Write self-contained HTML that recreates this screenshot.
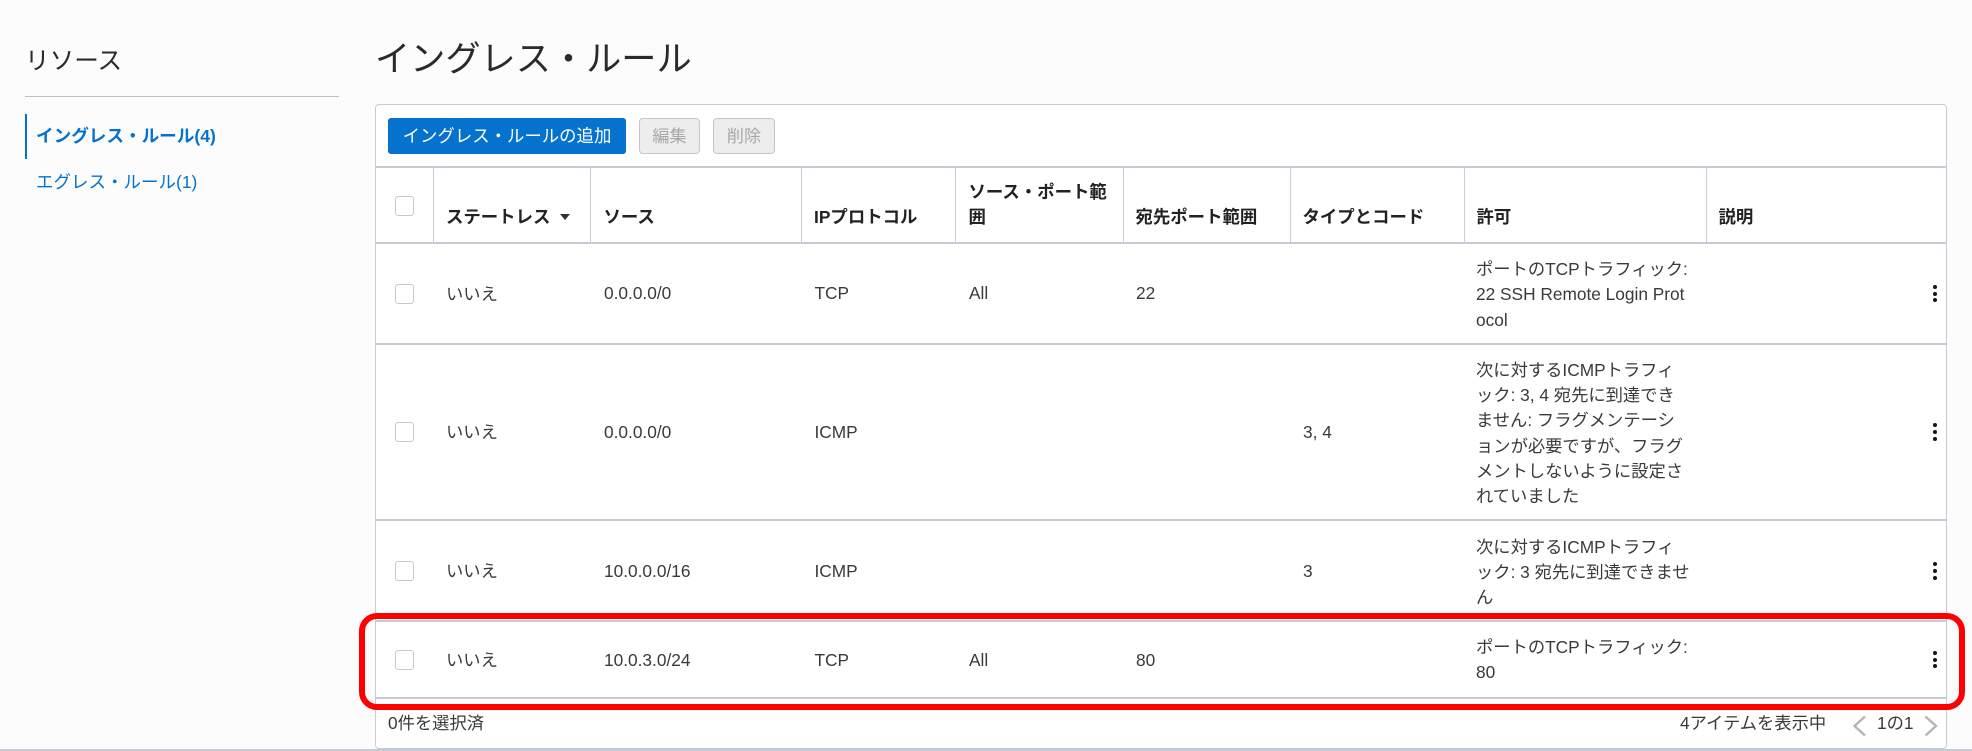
<!DOCTYPE html>
<html lang="ja">
<head>
<meta charset="utf-8">
<title>イングレス・ルール</title>
<style>
html,body{margin:0;padding:0;width:1972px;height:751px;overflow:hidden;background:#fcfcfc}
body{position:relative;font-family:"Liberation Sans","Noto Sans CJK JP",sans-serif;color:#3a3a3a;font-size:17.3px}
.a{position:absolute}
.t{position:absolute;white-space:nowrap;line-height:25.2px}
.h{position:absolute;white-space:nowrap;line-height:25.2px;font-weight:700;font-size:17.4px;color:#222}
.hl{position:absolute;left:376px;width:1570px;height:2px;background:#c6cad3}
.vl{position:absolute;top:168px;width:1px;height:75px;background:#c9cdd5}
.cb{position:absolute;left:395px;width:17px;height:18px;border:1px solid #c5c9d2;border-radius:3px;background:#fff}
.k{position:absolute;left:1932.5px;width:4px;height:4px;border-radius:50%;background:#161513}
</style>
</head>
<body>
<div class="a" style="left:0;top:749px;width:1972px;height:2px;background:#c6cad3"></div>

<div class="t" style="left:25px;top:48px;font-size:24.6px;line-height:28px;color:#2a2a2a">リソース</div>
<div class="a" style="left:25px;top:96px;width:314px;height:1px;background:#bcc0c9"></div>
<div class="a" style="left:25px;top:114px;width:2px;height:45px;background:#0572ce"></div>
<div class="t" style="left:36px;top:124px;font-size:17.6px;font-weight:700;color:#0572ce">イングレス・ルール(4)</div>
<div class="t" style="left:36px;top:169.5px;font-size:17.5px;color:#0572ce">エグレス・ルール(1)</div>

<div class="t" style="left:375px;top:39px;font-size:35.2px;line-height:42px;color:#2a2a2a">イングレス・ルール</div>

<div class="a" style="left:375px;top:104px;width:1570px;height:643px;background:#fff;border:1px solid #c6cad3;border-radius:4px;box-sizing:content-box"></div>

<div class="a" style="left:388px;top:118px;width:238px;height:36px;background:#0572ce;border-radius:3px;color:#fff;font-size:17.4px;line-height:36px;text-align:center;white-space:nowrap">イングレス・ルールの追加</div>
<div class="a" style="left:639px;top:118px;width:59px;height:34px;background:#ededed;border:1px solid #c4c6ca;border-radius:4px;color:#a8a8a8;font-size:17.2px;line-height:35px;text-align:center">編集</div>
<div class="a" style="left:713px;top:118px;width:60px;height:34px;background:#ededed;border:1px solid #c4c6ca;border-radius:4px;color:#a8a8a8;font-size:17.2px;line-height:35px;text-align:center">削除</div>

<div class="hl" style="top:166px"></div>
<div class="hl" style="top:242px"></div>
<div class="hl" style="top:343px"></div>
<div class="hl" style="top:519px"></div>
<div class="hl" style="top:620px"></div>
<div class="hl" style="top:697px"></div>

<div class="vl" style="left:433px"></div>
<div class="vl" style="left:590px"></div>
<div class="vl" style="left:801px"></div>
<div class="vl" style="left:955px"></div>
<div class="vl" style="left:1123px"></div>
<div class="vl" style="left:1290px"></div>
<div class="vl" style="left:1464px"></div>
<div class="vl" style="left:1706px"></div>

<div class="cb" style="top:196px"></div>
<div class="h" style="left:446px;top:205px">ステートレス</div>
<div class="a" style="left:560px;top:214px;width:0;height:0;border-left:5.5px solid transparent;border-right:5.5px solid transparent;border-top:6px solid #333"></div>
<div class="h" style="left:603.5px;top:205px">ソース</div>
<div class="h" style="left:814px;top:205px">IPプロトコル</div>
<div class="h" style="left:968.5px;top:180px">ソース・ポート範<br>囲</div>
<div class="h" style="left:1135.5px;top:205px">宛先ポート範囲</div>
<div class="h" style="left:1302.5px;top:205px">タイプとコード</div>
<div class="h" style="left:1476.5px;top:205px">許可</div>
<div class="h" style="left:1718.5px;top:205px">説明</div>

<div class="cb" style="top:284px"></div>
<div class="t" style="left:446px;top:281.5px">いいえ</div>
<div class="t" style="left:604px;top:281px">0.0.0.0/0</div>
<div class="t" style="left:814.5px;top:281px">TCP</div>
<div class="t" style="left:969px;top:281px">All</div>
<div class="t" style="left:1136px;top:281px">22</div>
<div class="t" style="left:1476px;top:256.5px;line-height:25.5px">ポートのTCPトラフィック:<br>22 SSH Remote Login Prot<br>ocol</div>
<div class="k" style="top:285px"></div><div class="k" style="top:291.5px"></div><div class="k" style="top:298px"></div>

<div class="cb" style="top:422px"></div>
<div class="t" style="left:446px;top:419.5px">いいえ</div>
<div class="t" style="left:604px;top:419.5px">0.0.0.0/0</div>
<div class="t" style="left:814.5px;top:419.5px">ICMP</div>
<div class="t" style="left:1303px;top:419.5px">3, 4</div>
<div class="t" style="left:1476px;top:358px">次に対するICMPトラフィ<br>ック: 3, 4 宛先に到達でき<br>ません: フラグメンテーシ<br>ョンが必要ですが、フラグ<br>メントしないように設定さ<br>れていました</div>
<div class="k" style="top:423px"></div><div class="k" style="top:430px"></div><div class="k" style="top:437px"></div>

<div class="cb" style="top:561px"></div>
<div class="t" style="left:446px;top:558.5px">いいえ</div>
<div class="t" style="left:604px;top:558.5px">10.0.0.0/16</div>
<div class="t" style="left:814.5px;top:558.5px">ICMP</div>
<div class="t" style="left:1303px;top:558.5px">3</div>
<div class="t" style="left:1476px;top:535px">次に対するICMPトラフィ<br>ック: 3 宛先に到達できませ<br>ん</div>
<div class="k" style="top:561.5px"></div><div class="k" style="top:568.5px"></div><div class="k" style="top:575.5px"></div>

<div class="cb" style="top:650px"></div>
<div class="t" style="left:446px;top:647.5px">いいえ</div>
<div class="t" style="left:604px;top:647.5px">10.0.3.0/24</div>
<div class="t" style="left:814.5px;top:647.5px">TCP</div>
<div class="t" style="left:969px;top:647.5px">All</div>
<div class="t" style="left:1136px;top:647.5px">80</div>
<div class="t" style="left:1476px;top:635px">ポートのTCPトラフィック:<br>80</div>
<div class="k" style="top:651px"></div><div class="k" style="top:657.5px"></div><div class="k" style="top:664px"></div>

<div class="t" style="left:388px;top:711px">0件を選択済</div>
<div class="t" style="left:1680px;top:711px">4アイテムを表示中</div>
<svg class="a" style="left:1850px;top:712px" width="90" height="26" viewBox="0 0 90 26"><path d="M15 4.5 L4.5 14 L15 23.5" fill="none" stroke="#b5b5b5" stroke-width="2.4"/><path d="M75.5 4.5 L86 14 L75.5 23.5" fill="none" stroke="#b5b5b5" stroke-width="2.4"/></svg>
<div class="t" style="left:1877px;top:711px">1の1</div>

<div class="a" style="left:359px;top:613px;width:1606px;height:97px;box-sizing:border-box;border:6px solid #f00;border-radius:18px"></div>
</body>
</html>
